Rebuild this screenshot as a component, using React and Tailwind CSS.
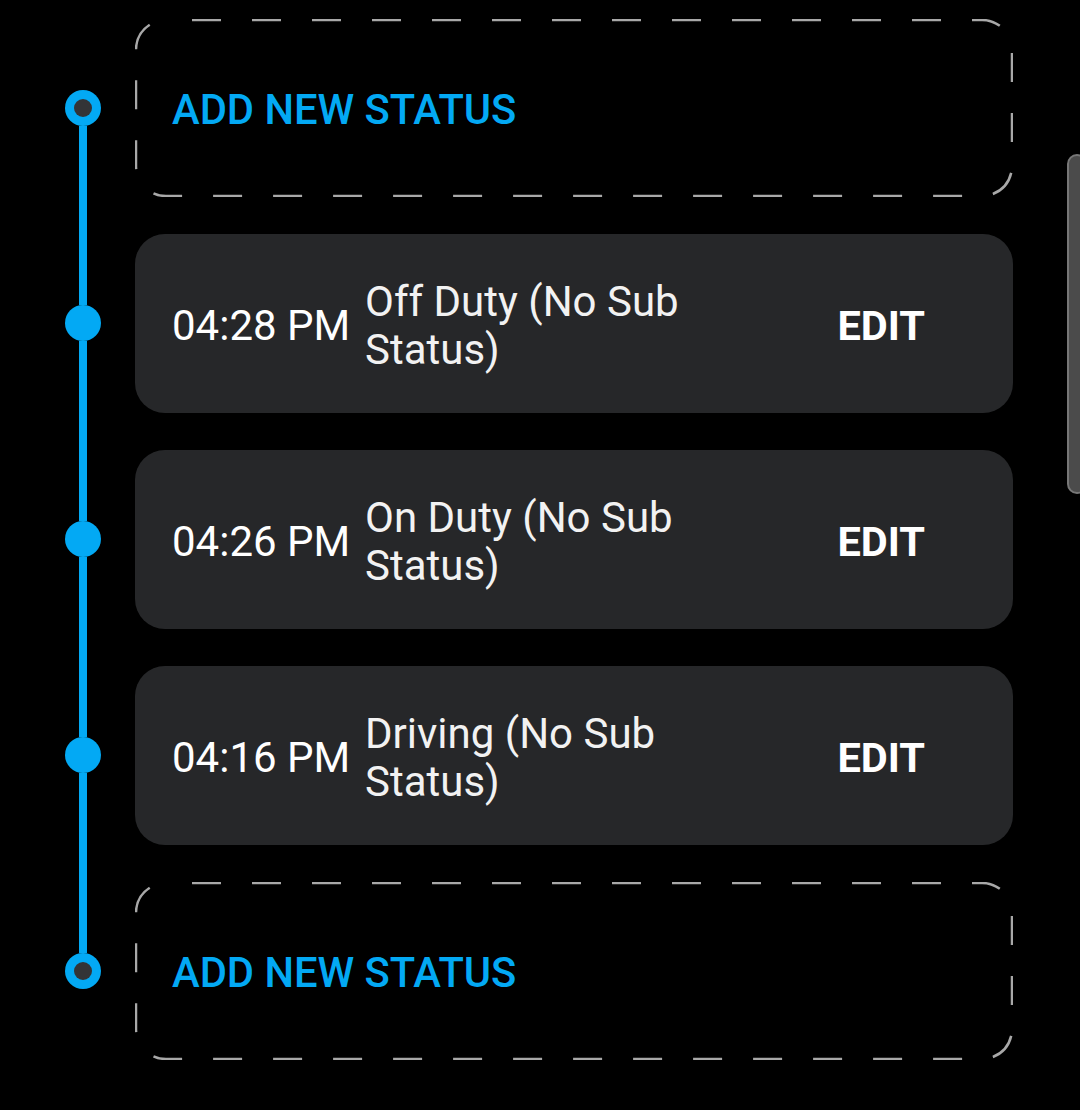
import React from 'react';

const entries = [
  { time: '04:28 PM', status: 'Off Duty (No Sub Status)' },
  { time: '04:26 PM', status: 'On Duty (No Sub Status)' },
  { time: '04:16 PM', status: 'Driving (No Sub Status)' },
];

const font = { fontFamily: 'Roboto, "Noto Sans", sans-serif' };

const RingDot = () => (
  <div className="w-9 h-9 rounded-full bg-[#03a9f4] flex items-center justify-center shrink-0">
    <div className="w-[18px] h-[18px] rounded-full bg-[#333437]" />
  </div>
);

const FilledDot = () => <div className="w-9 h-9 rounded-full bg-[#03a9f4] shrink-0" />;

// left rail: line above, dot, line below
const Rail = ({ top, bottom, ring }) => (
  <div className="w-[135px] shrink-0 flex">
    <div className="ml-[65px] w-9 flex flex-col items-center">
      <div className={'w-2 flex-1 ' + (top ? 'bg-[#03a9f4]' : '')} />
      {ring ? <RingDot /> : <FilledDot />}
      <div className={'w-2 flex-1 ' + (bottom ? 'bg-[#03a9f4]' : '')} />
    </div>
  </div>
);

const AddStatus = () => (
  <div className="relative w-[878px] h-[178px] flex items-center pl-[37px] pt-[4px]">
    <svg className="absolute inset-0" width="878" height="178">
      <rect
        x="1"
        y="1"
        width="876"
        height="176"
        rx="30"
        fill="none"
        stroke="#a8a8a8"
        strokeWidth="2.5"
        strokeDasharray="29 31"
        strokeDashoffset="34"
      />
    </svg>
    <span className="relative text-[41.7px] font-medium text-[#03a9f4] leading-none">ADD NEW STATUS</span>
  </div>
);

const StatusCard = ({ time, status }) => (
  <div className="w-[878px] h-[179px] rounded-[30px] bg-[#262729] flex items-center pl-[37px] pr-[88px] pt-[4px]">
    <span className="text-[42px] text-white leading-none w-[193px] shrink-0">{time}</span>
    <span className="text-[42px] text-[#f2f2f2] leading-[48px] w-[420px]">{status}</span>
    <span className="ml-auto text-[41.5px] font-bold text-white leading-none">EDIT</span>
  </div>
);

export default function App() {
  return (
    <div className="relative w-[1080px] h-[1110px] bg-black overflow-hidden" style={font}>
      <div className="flex">
        <Rail ring bottom />
        <div className="pt-[19px] pb-[18px]">
          <AddStatus />
        </div>
      </div>
      {entries.map((e, i) => (
        <div key={i} className="flex">
          <Rail top bottom />
          <div className="pt-[19px] pb-[18px]">
            <StatusCard time={e.time} status={e.status} />
          </div>
        </div>
      ))}
      <div className="flex">
        <Rail ring top />
        <div className="pt-[19px] pb-[18px]">
          <AddStatus />
        </div>
      </div>

      {/* scrollbar thumb */}
      <div className="absolute left-[1067px] top-[154px] w-[20px] h-[340px] rounded-[10px] bg-[#4b4b4b] border-2 border-[#777777]" />
    </div>
  );
}
